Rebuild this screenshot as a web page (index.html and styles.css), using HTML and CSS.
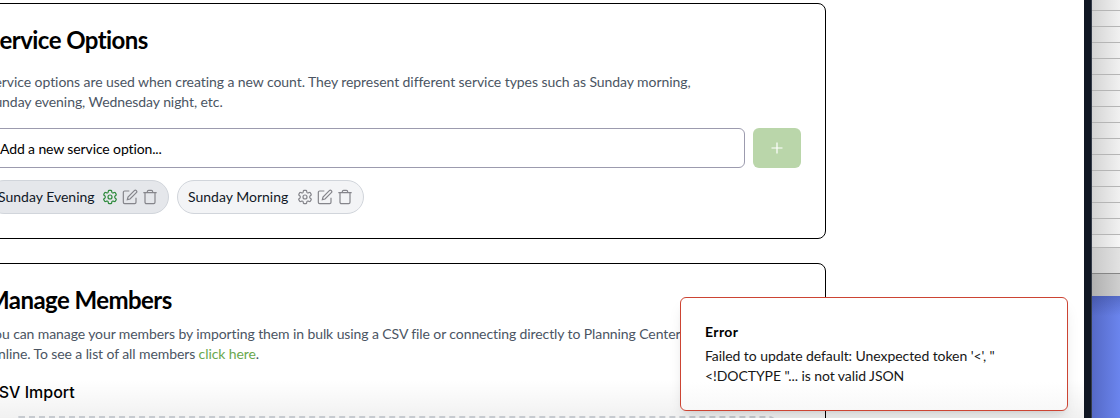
FILE: index.html
```
<!DOCTYPE html>
<html lang="en">
<head>
<meta charset="utf-8">
<title>Settings</title>
<link rel="stylesheet" href="styles.css">
</head>
<body>
<svg class="defs" width="0" height="0" aria-hidden="true">
  <symbol id="gear" viewBox="0 0 24 24"><path d="M9.6 2.9c.1-.6.6-.9 1.1-.9h2.6c.5 0 1 .3 1.1.9l.3 1.9c.1.4.3.6.7.8l.4.2c.3.2.7.2 1 .1l1.8-.7c.5-.2 1.1 0 1.4.5l1.3 2.3c.3.5.2 1.1-.3 1.4l-1.5 1.2c-.3.3-.4.6-.4 1v.8c0 .4.1.7.4 1l1.5 1.2c.4.3.5.9.3 1.4L20 18.3c-.3.5-.9.7-1.4.5l-1.8-.7c-.3-.1-.7-.1-1 .1l-.4.2c-.4.2-.6.4-.7.8l-.3 1.9c-.1.6-.6.9-1.1.9h-2.6c-.5 0-1-.3-1.1-.9l-.3-1.9c-.1-.4-.3-.6-.7-.8l-.4-.2c-.3-.2-.7-.2-1-.1l-1.8.7c-.5.2-1.1 0-1.4-.5l-1.3-2.3c-.3-.5-.2-1.1.3-1.4l1.5-1.2c.3-.3.4-.6.4-1v-.8c0-.4-.1-.7-.4-1L3 9.400c-.5-.3-.6-.9-.3-1.400L4 5.700c.3-.5.9-.7 1.400-.5l1.800.7c.3.1.7.1 1-.1l.4-.2c.4-.2.6-.4.7-.8z"/><circle cx="12" cy="12" r="3"/></symbol>
  <symbol id="edit" viewBox="0 0 24 24"><path d="M11 3H4a2 2 0 0 0-2 2v15a2 2 0 0 0 2 2h15a2 2 0 0 0 2-2v-7"/><path d="M18.5 2.5a2.1 2.1 0 0 1 3 3L12 15l-4 1 1-4z"/></symbol>
  <symbol id="trash" viewBox="0 0 24 24"><path d="M2 5.5h20M19.5 5.5V20c0 1-1 2-2 2h-11c-1 0-2-1-2-2V5.500M8 5.500V4c0-1 1-2 2-2h4c1 0 2 1 2 2v1.500"/></symbol>
</svg>
<div class="desktop">
  <main class="window">
    <section class="card services">
      <h2>Service Options</h2>
      <p class="desc">Service options are used when creating a new count. They represent different service types such as Sunday morning,<br>Sunday evening, Wednesday night, etc.</p>
      <div class="add-row">
        <div class="input">Add a new service option...</div>
        <div class="add"><svg viewBox="0 0 16 16"><path d="M8 2.5v11M2.5 8h11"/></svg></div>
      </div>
      <div class="pills">
        <div class="pill active"><span>Sunday Evening</span><svg class="gear"><use href="#gear"/></svg><svg><use href="#edit"/></svg><svg class="trash"><use href="#trash"/></svg></div>
        <div class="pill"><span>Sunday Morning</span><svg class="gear"><use href="#gear"/></svg><svg><use href="#edit"/></svg><svg class="trash"><use href="#trash"/></svg></div>
      </div>
    </section>
    <section class="card members">
      <h2>Manage Members</h2>
      <p class="desc">You can manage your members by importing them in bulk using a CSV file or connecting directly to Planning Center<br>Online. To see a list of all members <a>click here</a>.</p>
      <h3>CSV Import</h3>
      <div class="dropzone"></div>
    </section>
    <div class="fade"></div>
    <div class="toast">
      <strong>Error</strong>
      <div>Failed to update default: Unexpected token '&lt;', "<br>&lt;!DOCTYPE "... is not valid JSON</div>
    </div>
  </main>
  <div class="edge"></div>
  <aside class="behind">
    <div class="rows"></div>
    <div class="row-last"></div>
    <div class="row-bar"></div>
    <div class="footer"></div>
    <div class="wallpaper"></div>
  </aside>
</div>
</body>
</html>
```
FILE: styles.css
```
* { box-sizing: border-box; }
body { margin: 0; font: 14px/20px Lato, sans-serif; font-variant-ligatures: none; color: #000; background: #fff; overflow: hidden; }
.defs { position: absolute; }
h2, h3, p { margin: 0; }
.desktop { display: flex; width: 1120px; height: 418px; overflow: hidden; }
.window { position: relative; width: 1084px; height: 418px; padding-top: 3px; overflow: hidden; background: #fff; }
.card { width: 863px; margin-left: -37px; padding: 24px 24px 24px 23px; border: 1px solid #000; border-radius: 8px; }
.services { height: 236px; margin-bottom: 24px; }
.members { height: 300px; }
h2 { font-size: 24px; line-height: 24px; font-weight: 700; letter-spacing: -0.56px; }
.desc { margin-top: 20px; color: #4b5563; white-space: nowrap; letter-spacing: -0.07px; }
.members .desc { margin-top: 12px; letter-spacing: -0.095px; }
.desc a { color: #6aa84f; }
.add-row { display: flex; gap: 8px; margin: 16px 0 12px; }
.input { flex: 1; height: 40px; padding: 10px 12px; border: 1px solid #9c9bae; border-radius: 6px; letter-spacing: -0.12px; }
.add { display: flex; width: 48px; height: 40px; align-items: center; justify-content: center; border-radius: 6px; background: #bad6aa; }
.add svg { width: 16px; height: 16px; stroke: #fff; fill: none; stroke-width: 1.2; }
.pills { display: flex; gap: 8px; }
.pill { display: flex; width: 187px; height: 34px; padding: 0 10px; align-items: center; border: 1px solid #d1d5db; border-radius: 17px; background: #f3f4f6; color: #111827; }
.pill.active { width: 182px; background: #e5e7eb; }
.pill span { margin-right: auto; white-space: nowrap; }
.pill svg { width: 16px; height: 16px; margin-left: 4px; fill: none; stroke: #85858b; stroke-width: 1.8; }
.pill.active .gear { stroke: #2d8a3b; }
h3 { margin-top: 16px; font: 500 16px/24px Inter, sans-serif; }
.dropzone { height: 100px; margin: 12px 24px 0 24px; border: 2px dashed #d1d5db; border-radius: 8px; }
.toast { position: absolute; left: 680px; top: 297px; width: 388px; height: 114px; padding: 24px; border: 1px solid #cc4433; border-radius: 6px; background: linear-gradient(#fff 75%, #f8f8f8); color: #171717; letter-spacing: -0.07px; box-shadow: 0 10px 15px -3px rgba(0,0,0,.1), 0 4px 6px -4px rgba(0,0,0,.1); }
.toast strong { display: block; margin-bottom: 4px; color: #000; font-weight: 700; letter-spacing: 0.4px; }
.toast strong { letter-spacing: 0.4px; }
.fade { position: absolute; left: 0; right: 0; bottom: 0; height: 38px; background: linear-gradient(transparent, rgba(0,0,0,.055)); }
.edge { width: 8px; background: #101723; border-right: 1px solid #343b49; }
.behind { display: flex; flex-direction: column; width: 28px; }
.rows { height: 235px; background: repeating-linear-gradient(transparent 0 10px, #b5b5b5 10px 11px, transparent 11px 16px), linear-gradient(90deg, #d4d4d4, #f1f1f1); }
.row-last { height: 13px; border-bottom: 1px solid #b5b5b5; background: linear-gradient(90deg, #d9d9d9, #f6f6f6); }
.row-bar { height: 26px; border-bottom: 1px solid #858585; background: linear-gradient(90deg, #c9c9c9, #e2e2e2); }
.footer { height: 22px; background: linear-gradient(90deg, #b0b0b0, #cfcfcf); }
.wallpaper { flex: 1; background: linear-gradient(rgba(25,35,90,.25), transparent 20px), linear-gradient(90deg, #5569c6, #6b85ee); }
```
